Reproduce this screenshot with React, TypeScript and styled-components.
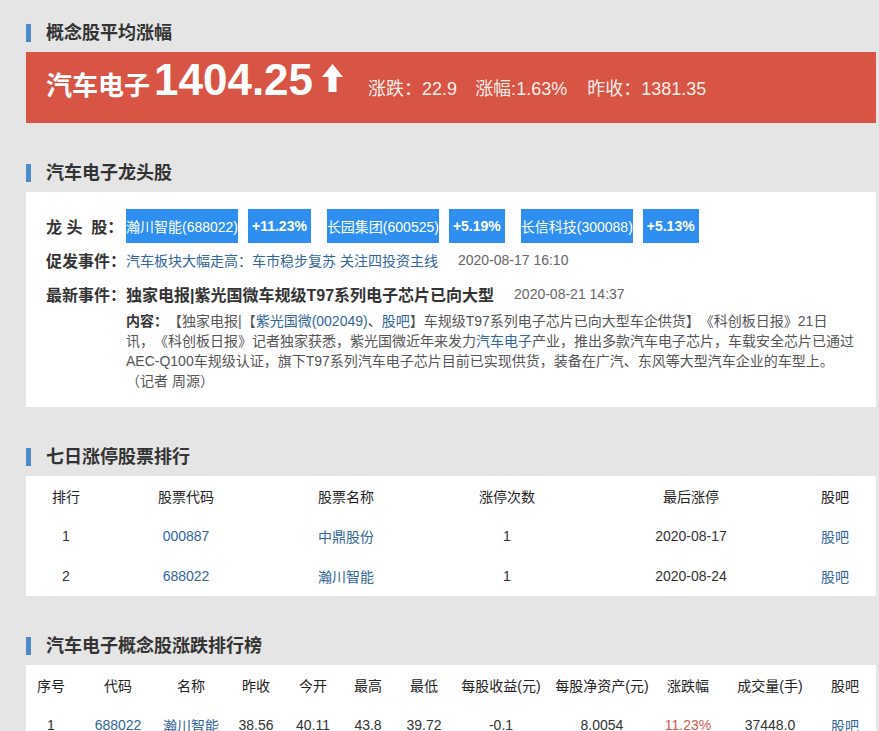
import React from 'react'
import styled, { createGlobalStyle } from 'styled-components'

const Color = {
  BG: '#e5e5e5',
  TEXT: '#333333',
  SUB: '#555555',
  GRAY: '#666666',
  LINK: '#336699',
  BAR: '#4b8bc8',
  RED: '#d85444',
  TAG: '#2f8ff0',
  UP: '#d0584a',
  WHITE: '#ffffff',
}

type Cell = { text: string, link?: boolean, up?: boolean }

const limitCols = ['80px', '160px', '160px', '162px', '206px', '82px']
const limitHead = ['排行', '股票代码', '股票名称', '涨停次数', '最后涨停', '股吧']
const limitRows: Cell[][] = [
  [{ text: '1' }, { text: '000887', link: true }, { text: '中鼎股份', link: true }, { text: '1' }, { text: '2020-08-17' }, { text: '股吧', link: true }],
  [{ text: '2' }, { text: '688022', link: true }, { text: '瀚川智能', link: true }, { text: '1' }, { text: '2020-08-24' }, { text: '股吧', link: true }],
]

const rankCols = ['50px', '84px', '62px', '68px', '46px', '64px', '48px', '106px', '96px', '76px', '88px', '62px']
const rankHead = ['序号', '代码', '名称', '昨收', '今开', '最高', '最低', '每股收益(元)', '每股净资产(元)', '涨跌幅', '成交量(手)', '股吧']
const rankRows: Cell[][] = [
  [
    { text: '1' }, { text: '688022', link: true }, { text: '瀚川智能', link: true },
    { text: '38.56' }, { text: '40.11' }, { text: '43.8' }, { text: '39.72' },
    { text: '-0.1' }, { text: '8.0054' }, { text: '11.23%', up: true }, { text: '37448.0' },
    { text: '股吧', link: true },
  ],
]

const leaders = [
  { name: '瀚川智能(688022)', pct: '+11.23%' },
  { name: '长园集团(600525)', pct: '+5.19%' },
  { name: '长信科技(300088)', pct: '+5.13%' },
]

const DataTable: React.FC<{ cols: string[], head: string[], rows: Cell[][] }> = ({ cols, head, rows }) => (
  <TableCard>
    <StyledRow $cols={cols}>
      {head.map(h => <StyledHeadCell key={h}>{h}</StyledHeadCell>)}
    </StyledRow>
    {rows.map((row, i) => (
      <StyledRow key={i} $cols={cols}>
        {row.map((c, j) => (
          <StyledCell key={j} $link={c.link} $up={c.up}>{c.text}</StyledCell>
        ))}
      </StyledRow>
    ))}
  </TableCard>
)

const App: React.FC = () => (
  <>
    <GlobalStyle />
    <Page>
      <Section>
        <SectionTitle>概念股平均涨幅</SectionTitle>
        <Banner>
          <ConceptName>汽车电子</ConceptName>
          <Price>1404.25</Price>
          <UpArrow width="21" height="28" viewBox="0 0 21 28">
            <path d="M10.5 0 L21 13 L14.5 13 L14.5 28 L6.5 28 L6.5 13 L0 13 Z" fill="#fff" />
          </UpArrow>
          <Stat $gap={25}>涨跌：22.9</Stat>
          <Stat $gap={18}>涨幅:1.63%</Stat>
          <Stat $gap={20}>昨收：1381.35</Stat>
        </Banner>
      </Section>

      <Section>
        <SectionTitle>汽车电子龙头股</SectionTitle>
        <LeaderCard>
          <InfoRow>
            <Label>{'龙 头  股：'}</Label>
            {leaders.map(l => (
              <React.Fragment key={l.name}>
                <NameTag>{l.name}</NameTag>
                <PctTag>{l.pct}</PctTag>
              </React.Fragment>
            ))}
          </InfoRow>
          <InfoRow>
            <Label>促发事件：</Label>
            <EventLink>汽车板块大幅走高：车市稳步复苏 关注四投资主线</EventLink>
            <DateText>2020-08-17 16:10</DateText>
          </InfoRow>
          <InfoRow>
            <Label>最新事件：</Label>
            <EventTitle>独家电报|紫光国微车规级T97系列电子芯片已向大型</EventTitle>
            <DateText>2020-08-21 14:37</DateText>
          </InfoRow>
          <Content>
            <ContentLabel>内容：</ContentLabel>
            【独家电报|【<InlineLink>紫光国微(002049)</InlineLink>、<InlineLink>股吧</InlineLink>】车规级T97系列电子芯片已向大型车企供货】《科创板日报》21日讯，《科创板日报》记者独家获悉，紫光国微近年来发力<InlineLink>汽车电子</InlineLink>产业，推出多款汽车电子芯片，车载安全芯片已通过AEC-Q100车规级认证，旗下T97系列汽车电子芯片目前已实现供货，装备在广汽、东风等大型汽车企业的车型上。
            <br />
            （记者 周源）
          </Content>
        </LeaderCard>
      </Section>

      <Section>
        <SectionTitle>七日涨停股票排行</SectionTitle>
        <DataTable cols={limitCols} head={limitHead} rows={limitRows} />
      </Section>

      <Section>
        <SectionTitle>汽车电子概念股涨跌排行榜</SectionTitle>
        <DataTable cols={rankCols} head={rankHead} rows={rankRows} />
      </Section>
    </Page>
  </>
)

export default App

const GlobalStyle = createGlobalStyle`
  body {
    margin: 0;
    background: ${Color.BG};
    font-family: "Liberation Sans", "Noto Sans CJK SC", sans-serif;
    color: ${Color.TEXT};
    text-spacing-trim: space-all;
  }
`

const Page = styled.div`
  width: 850px;
  padding: 14px 0 0 26px;
`

const Section = styled.section`
  margin-bottom: 31px;
`

const SectionTitle = styled.h2`
  display: flex;
  align-items: center;
  height: 38px;
  margin: 0;
  font-size: 18px;
  font-weight: bold;
  line-height: 1;
  color: ${Color.TEXT};

  &::before {
    content: '';
    width: 5px;
    height: 18px;
    margin-right: 15px;
    background: ${Color.BAR};
  }
`

const Banner = styled.div`
  display: flex;
  align-items: baseline;
  box-sizing: border-box;
  height: 71px;
  padding: 6px 20px 0;
  background: ${Color.RED};
  color: ${Color.WHITE};
`

const ConceptName = styled.span`
  font-size: 26px;
  font-weight: bold;
  line-height: 1;
`

const Price = styled.span`
  margin-left: 4px;
  font-size: 44px;
  font-weight: bold;
  line-height: 44px;
`

const UpArrow = styled.svg`
  align-self: flex-start;
  margin: 6px 0 0 9px;
`

type StatProps = {
  readonly $gap: number
}

const Stat = styled.span<StatProps>`
  margin-left: ${props => props.$gap}px;
  font-size: 18px;
  line-height: 1;
  color: rgba(255, 255, 255, 0.92);
`

const LeaderCard = styled.div`
  padding: 17px 20px 16px;
  background: ${Color.WHITE};
`

const InfoRow = styled.div`
  display: flex;
  align-items: center;
  height: 34px;
  white-space: nowrap;
`

const Label = styled.span`
  flex-shrink: 0;
  width: 80px;
  font-size: 16px;
  font-weight: bold;
  white-space: pre;
  color: ${Color.TEXT};
`

const NameTag = styled.span`
  display: flex;
  align-items: center;
  justify-content: center;
  flex-shrink: 0;
  width: 112px;
  height: 34px;
  margin-right: 10px;
  overflow: hidden;
  background: ${Color.TAG};
  color: ${Color.WHITE};
  font-size: 14px;
`

const PctTag = styled.span`
  display: flex;
  align-items: center;
  height: 34px;
  padding: 0 4px;
  margin-right: 16px;
  background: ${Color.TAG};
  color: ${Color.WHITE};
  font-size: 14px;
  font-weight: bold;
`

const EventLink = styled.span`
  font-size: 14px;
  color: ${Color.LINK};
`

const EventTitle = styled.span`
  font-size: 16px;
  font-weight: bold;
  color: ${Color.TEXT};
`

const DateText = styled.span`
  margin-left: 20px;
  font-size: 14px;
  color: ${Color.GRAY};
`

const Content = styled.div`
  width: 728.6px;
  margin-left: 80px;
  font-size: 14px;
  line-height: 20px;
  color: ${Color.SUB};
`

const ContentLabel = styled.b`
  color: ${Color.TEXT};
`

const InlineLink = styled.span`
  color: ${Color.LINK};
`

const TableCard = styled.div`
  background: ${Color.WHITE};
`

type StyledRowProps = {
  readonly $cols: string[]
}

const StyledRow = styled.div<StyledRowProps>`
  display: grid;
  grid-template-columns: ${props => props.$cols.join(' ')};
  align-items: center;
  height: 40px;
`

const StyledHeadCell = styled.div`
  display: flex;
  justify-content: center;
  white-space: nowrap;
  font-size: 14px;
  color: #222;
`

type StyledCellProps = {
  readonly $link?: boolean
  readonly $up?: boolean
}

const StyledCell = styled.div<StyledCellProps>`
  display: flex;
  justify-content: center;
  white-space: nowrap;
  font-size: 14px;
  color: ${props => props.$up ? Color.UP : props.$link ? Color.LINK : Color.TEXT};
`
